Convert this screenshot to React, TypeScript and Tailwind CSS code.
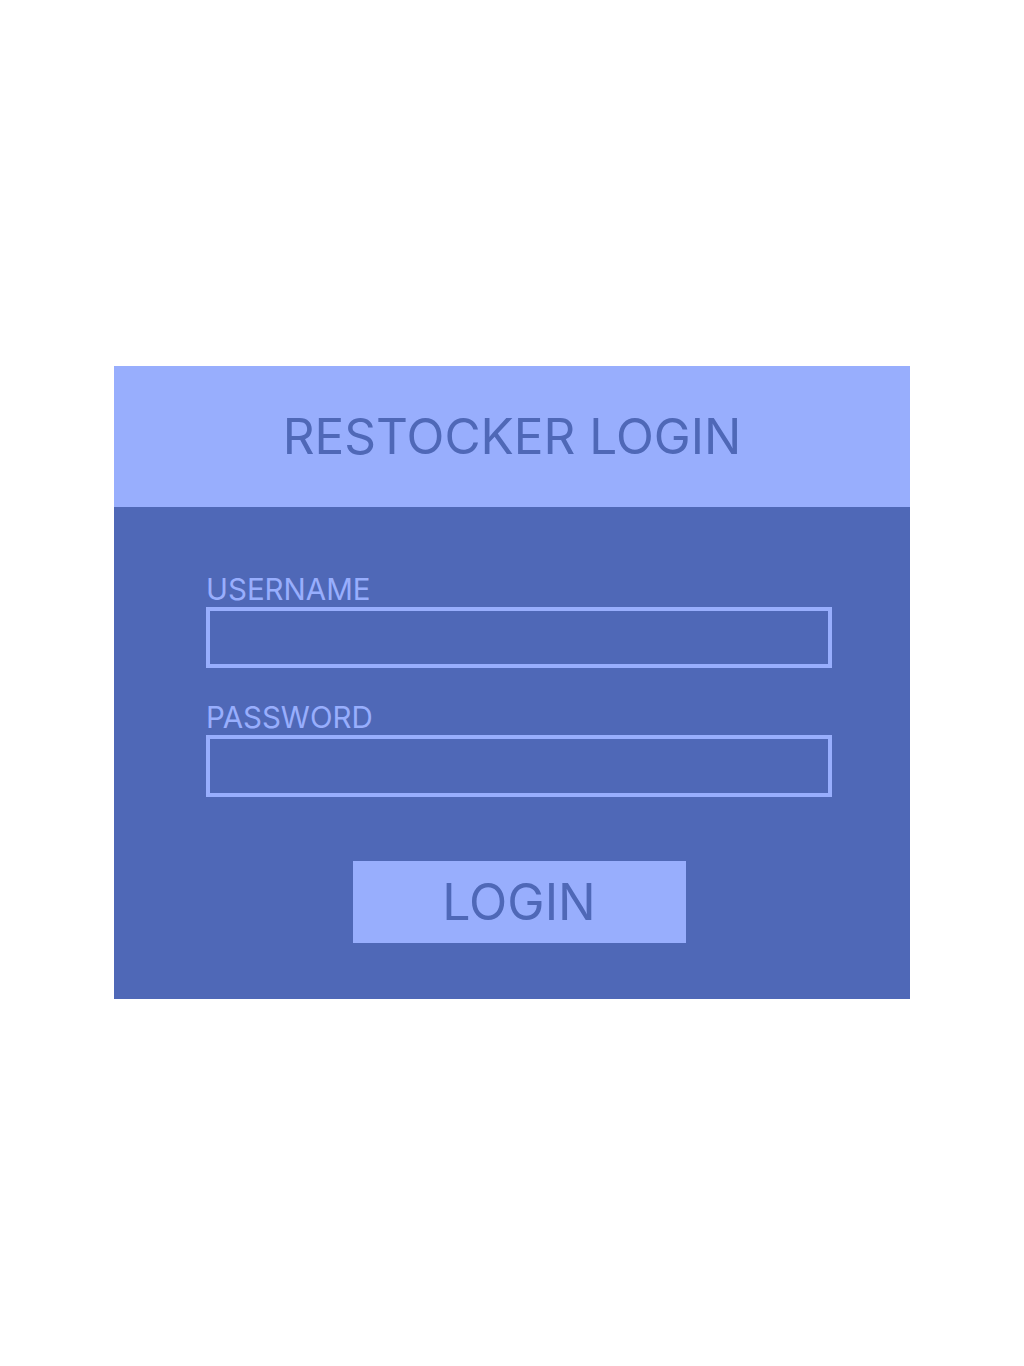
import React from "react";

export default function App() {
  return (
    <div
      className="w-[1024px] h-[1366px] bg-white flex items-start justify-center pt-[366px]"
      style={{ fontFamily: "Inter, 'Noto Sans', sans-serif" }}
    >
      <div className="w-[796px] flex flex-col">
        <div className="h-[141px] bg-[#98aefd] flex items-center justify-center">
          <h1 className="text-[49.5px] leading-none font-normal text-[#4f68b7]">RESTOCKER LOGIN</h1>
        </div>
        <div className="bg-[#4f68b7] pt-[67px] pb-[56px] pl-[92px] pr-[78px] flex flex-col">
          <label className="text-[29.5px] h-[30px] leading-[30px] text-[#98aefd] mb-[3px]">USERNAME</label>
          <input
            type="text"
            className="w-[626px] h-[61px] border-4 border-[#98aefd] bg-transparent outline-none"
          />
          <label className="text-[29.5px] h-[30px] leading-[30px] text-[#98aefd] mt-[34px] mb-[3px]">PASSWORD</label>
          <input
            type="password"
            className="w-[626px] h-[62px] border-4 border-[#98aefd] bg-transparent outline-none"
          />
          <div className="w-[626px] flex justify-center mt-[64px]">
            <button className="w-[333px] h-[82px] bg-[#98aefd] text-[#4f68b7] text-[50px] leading-none flex items-center justify-center">
              LOGIN
            </button>
          </div>
        </div>
      </div>
    </div>
  );
}
